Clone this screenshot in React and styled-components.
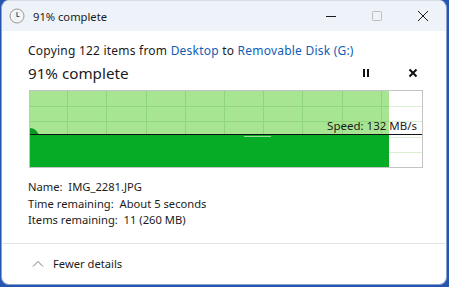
import React from "react";
import styled, { createGlobalStyle } from "styled-components";

const Global = createGlobalStyle`
  html, body { margin: 0; padding: 0; }
  body {
    width: 449px;
    height: 287px;
    overflow: hidden;
    background: #2456b0;
    font-family: "Noto Sans", "Open Sans", sans-serif;
  }
`;

const Window = styled.div`
  box-sizing: border-box;
  margin-left: 1px;
  width: 446px;
  height: 285px;
  border-radius: 8px;
  overflow: hidden;
  background: #ffffff;
  display: flex;
  flex-direction: column;
  border: 1px solid #8aa2cf;
  border-top-color: #d8dde8;
`;

const TitleBar = styled.div`
  height: 30px;
  flex: none;
  display: flex;
  align-items: center;
  background: #eef2f9;
  padding-left: 7px;
`;

const TitleText = styled.span`
  font-size: 11.2px;
  color: #1b1b1b;
  margin-left: 8px;
  flex: 1;
`;

const Controls = styled.div`
  display: flex;
  height: 100%;
`;

const CtrlButton = styled.div`
  width: 46px;
  height: 100%;
  display: flex;
  align-items: center;
  justify-content: center;
`;

const Content = styled.div`
  flex: 1;
  display: flex;
  flex-direction: column;
  padding: 0 25px 0 26px;
`;

const CopyLine = styled.div`
  margin-top: 11px;
  font-size: 12px;
  letter-spacing: 0.22px;
  line-height: 17px;
  color: #1b1b1b;
  white-space: nowrap;
`;

const Link = styled.span`
  color: #0f5db6;
`;

const HeadRow = styled.div`
  display: flex;
  align-items: center;
  gap: 31px;
  margin-top: 3px;
  height: 22px;
`;

const BigTitle = styled.div`
  flex: 1;
  font-size: 15.2px;
  color: #1b1b1b;
`;

const Action = styled.div`
  width: 16px;
  height: 22px;
  display: flex;
  align-items: center;
  justify-content: center;
`;

const Graph = styled.div`
  position: relative;
  margin-top: 6px;
  width: 394px;
  height: 78px;
  box-sizing: border-box;
  border: 1px solid #c4c4c4;
  margin-left: 1px;
`;

const Speed = styled.span`
  position: absolute;
  right: 5px;
  top: 27px;
  font-size: 11.5px;
  line-height: 16px;
  color: #1b1b1b;
`;

const Details = styled.div`
  margin-top: 11px;
  display: flex;
  flex-direction: column;
`;

const DetailLine = styled.div`
  font-size: 11.2px;
  line-height: 16.5px;
  color: #1b1b1b;
  white-space: pre;
`;

const Separator = styled.div`
  height: 1px;
  background: #e3e3e3;
  margin-top: 14px;
  flex: none;
`;

const Footer = styled.div`
  height: 46px;
  display: flex;
  align-items: center;
  padding-left: 30px;
  gap: 9px;
  font-size: 11.2px;
  color: #1b1b1b;
`;

const ClockIcon = () => (
  <svg width="16" height="16" viewBox="0 0 16 16">
    <circle cx="8" cy="8" r="7" fill="#f4f4f4" stroke="#9a9a9a" strokeWidth="1" />
    <path d="M8 4 V8.5 H10.5" fill="none" stroke="#555" strokeWidth="1.1" />
  </svg>
);

const W = 392;
const H = 76;
const colW = W / 10;
const rowH = H / 5;
const greenEnd = 359;
const lineY = 44;

const Chart = () => {
  const verts = [];
  for (let i = 1; i < 10; i++) {
    const x = Math.round(i * colW) - 1.5;
    verts.push(x);
  }
  const hors = [];
  for (let i = 1; i < 5; i++) hors.push(Math.round(i * rowH) + 0.5);
  return (
    <svg width={W} height={H} style={{ display: "block" }}>
      <rect x="0" y="0" width={W} height={H} fill="#ffffff" />
      <rect x="0" y="0" width={greenEnd} height={H} fill="#a8e592" />
      {verts.map((x) => (
        <line key={"v" + x} x1={x} y1="0" x2={x} y2={H} stroke={x < greenEnd ? "#8fd67a" : "#d9f0d2"} strokeWidth="1" />
      ))}
      {hors.map((y) => (
        <g key={"h" + y}>
          <line x1="0" y1={y} x2={greenEnd} y2={y} stroke="#8fd67a" strokeWidth="1" />
          <line x1={greenEnd} y1={y} x2={W} y2={y} stroke="#d9f0d2" strokeWidth="1" />
        </g>
      ))}
      <rect x="0" y={lineY} width={greenEnd} height={H - lineY} fill="#06ac26" />
      <path d={`M0 ${lineY} L0 37 Q6 37 9 ${lineY} Z`} fill="#0a9a24" />
      <line x1="214" y1={lineY + 1.5} x2="241" y2={lineY + 1.5} stroke="#9fdc99" strokeWidth="1" />
      <line x1="0" y1={lineY - 0.5} x2={W} y2={lineY - 0.5} stroke="#111" strokeWidth="1.2" />
    </svg>
  );
};

export default function App() {
  return (
    <>
      <Global />
      <Window>
        <TitleBar>
          <ClockIcon />
          <TitleText>91% complete</TitleText>
          <Controls>
            <CtrlButton>
              <svg width="12" height="12" viewBox="0 0 12 12">
                <line x1="1" y1="6.5" x2="11" y2="6.5" stroke="#1b1b1b" strokeWidth="1" />
              </svg>
            </CtrlButton>
            <CtrlButton>
              <svg width="12" height="12" viewBox="0 0 12 12">
                <rect x="1.5" y="1.5" width="9" height="9" rx="1" fill="none" stroke="#bdbdbd" strokeWidth="1" />
              </svg>
            </CtrlButton>
            <CtrlButton>
              <svg width="12" height="12" viewBox="0 0 12 12">
                <path d="M1 1 L11 11 M11 1 L1 11" stroke="#1b1b1b" strokeWidth="1" />
              </svg>
            </CtrlButton>
          </Controls>
        </TitleBar>
        <Content>
          <CopyLine>
            Copying 122 items from <Link>Desktop</Link> to <Link>Removable Disk (G:)</Link>
          </CopyLine>
          <HeadRow>
            <BigTitle>91% complete</BigTitle>
            <Action>
              <svg width="10" height="10" viewBox="0 0 10 10">
                <rect x="2" y="1" width="2" height="8" fill="#111" />
                <rect x="6" y="1" width="2" height="8" fill="#111" />
              </svg>
            </Action>
            <Action>
              <svg width="10" height="10" viewBox="0 0 10 10">
                <path d="M1.5 1.5 L8.5 8.5 M8.5 1.5 L1.5 8.5" stroke="#111" strokeWidth="2" />
              </svg>
            </Action>
          </HeadRow>
          <Graph>
            <Chart />
            <Speed>Speed: 132 MB/s</Speed>
          </Graph>
          <Details>
            <DetailLine>Name:  IMG_2281.JPG</DetailLine>
            <DetailLine>Time remaining:  About 5 seconds</DetailLine>
            <DetailLine>Items remaining:  11 (260 MB)</DetailLine>
          </Details>
        </Content>
        <Separator />
        <Footer>
          <svg width="12" height="8" viewBox="0 0 12 8">
            <path d="M1 6.5 L6 1.5 L11 6.5" fill="none" stroke="#777" strokeWidth="1" />
          </svg>
          <span>Fewer details</span>
        </Footer>
      </Window>
    </>
  );
}
